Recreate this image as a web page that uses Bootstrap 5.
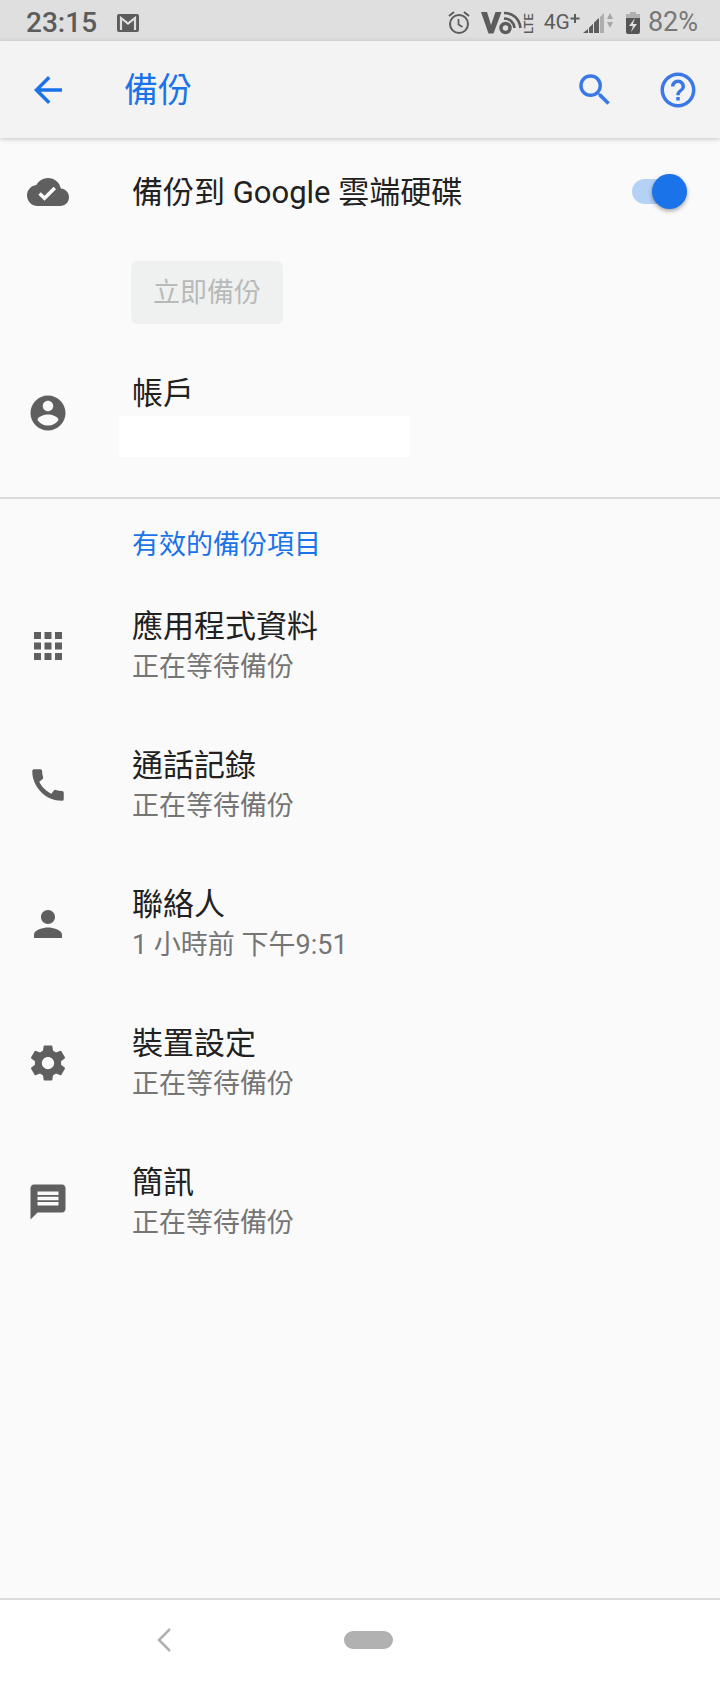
<!DOCTYPE html>
<html lang="zh-Hant">
<head>
<meta charset="utf-8">
<meta name="viewport" content="width=device-width, initial-scale=1">
<title>備份</title>
<link href="https://cdn.jsdelivr.net/npm/bootstrap@5.3.0/dist/css/bootstrap.min.css" rel="stylesheet">
<style>
  body { font-family: Roboto, "Noto Sans CJK TC", sans-serif; background: #fafafa; color: #212121; }
  .ink-blue { color: #1a73e8; }
  .status-bar { height: 41px; background: #dfdfdf; color: #5c5c5c; padding: 4px 22px 0 26px; font-size: 28px; line-height: 37px; }
  .status-bar svg { flex: none; }
  .gap-mail { margin-left: 20px; }
  .status-icons { gap: 11px; }
  .status-net { font-family: "Liberation Sans Narrow", Roboto, sans-serif; font-size: 21px; margin-left: -2px; }
  .status-signal { margin: 0 2px 0 -8px; }
  .status-level { color: #777; font-size: 27px; margin-left: -3px; }
  .app-bar { height: 97px; background: #f3f3f3; padding: 0 21px 0 27px; box-shadow: 0 1px 5px rgba(0,0,0,.22); z-index: 1; }
  .app-title { font-size: 34px; line-height: 48px; margin-left: 55px; }
  .icon-btn { width: 42px; height: 42px; padding: 0; border: 0; background: none; display: flex; color: #1a73e8; }
  .app-tools { gap: 41px; }
  .app-tools .icon-btn { color: #3b78e7; }
  .ico { width: 42px; height: 42px; fill: currentColor; flex: none; }
  .pref-row { min-height: 139px; padding: 0 33px 0 27px; gap: 63px; color: inherit; text-decoration: none; }
  .pref-row .ico { color: #5f5f5f; }
  .pref-main { min-height: 107px; }
  .pref-text { padding-top: 2px; }
  .pref-title { font-size: 31px; line-height: 40px; display: block; }
  .pref-note { font-size: 27px; line-height: 40px; display: block; color: #757575; }
  .text-column { padding-left: 132px; }
  .action-column { padding-left: 131px; }
  .btn-backup, .btn-backup:disabled { width: 152px; height: 63px; margin-top: 16px; margin-bottom: 19px; padding: 0; border: 0; border-radius: 6px; font-size: 27px; line-height: 40px; background: #eff1f1; color: #b8baba; opacity: 1; }
  .account-text { align-self: flex-start; padding-top: 31px; }
  .account-name { width: 291px; height: 41px; margin: 2px 0 0 -13px; background: #fff; }
  .section-list { border-top: 2px solid #dadada; margin-top: 15px; }
  .section-title { font-size: 27px; line-height: 40px; padding-top: 26px; padding-bottom: 11px; margin: 0; }
  .toggle.form-check-input { position: relative; width: 55px; height: 25px; margin: 0; border: 0; border-radius: 13px; background: #b5d1f6; }
  .toggle.form-check-input:checked { background: #b5d1f6; }
  .toggle::after { content: ""; position: absolute; right: 0; top: -5px; width: 35px; height: 35px; border-radius: 50%; background: #1a73e8; box-shadow: 0 2px 4px rgba(0,0,0,.35); }
  .nav-keys { height: 83px; background: #fff; border-top: 2px solid #dcdcdc; padding-left: 143px; padding-bottom: 2px; gap: 159px; }
  .home-key { width: 49px; height: 18px; padding: 0; border: 0; border-radius: 9px; background: #b1b1b1; }
</style>
</head>
<body>
<div class="min-vh-100 d-flex flex-column">
  <div class="status-bar d-flex align-items-center">
    <span class="fw-medium">23:15</span>
    <svg class="gap-mail" width="22" height="18" viewBox="0 0 22 18" aria-hidden="true"><rect width="22" height="18" rx="2" fill="#5c5c5c"/><path d="M4 16V4l7 5.500 7-5.500v12" fill="none" stroke="#dfdfdf" stroke-width="2.200"/></svg>
    <div class="status-icons d-flex align-items-center ms-auto">
      <svg width="22" height="24" viewBox="0 0 22 24" fill="none" stroke="#5c5c5c" aria-hidden="true"><circle cx="11" cy="13" r="9" stroke-width="2"/><path d="M1 5l5-4M21 5l-5-4" stroke-width="2"/><path d="M10.500 8v5.500l4 2.500" stroke-width="1.700"/></svg>
      <svg width="54" height="28" viewBox="0 0 54 28" aria-label="VoLTE"><path d="M0 3h6l4 13 4.500-13h6L12.500 24.500h-5z" fill="#5c5c5c"/><g fill="none" stroke="#5c5c5c"><circle cx="24.500" cy="19" r="4.500" stroke-width="3.500"/><path d="M23 9.500c6 0 10 4 10.500 9.500M23 4c9 0 15.500 5.500 16.500 15" stroke-width="2.600"/></g><text transform="translate(52 25) rotate(-90)" font-family="Roboto, sans-serif" font-size="13" font-weight="500" fill="#5c5c5c">LTE</text></svg>
      <span class="status-net">4G<svg width="10" height="20" viewBox="0 0 10 20" aria-label="+"><path d="M5 1v9M.5 5.500h9" stroke="#5c5c5c" stroke-width="2"/></svg></span>
      <svg class="status-signal" width="30" height="22" viewBox="0 0 30 22" aria-hidden="true"><path d="M0 21l5-4v4zM6 16l4-4v9H6zM11 11l4-4v14h-4z" fill="#5c5c5c"/><path d="M16 21V6l-5 5-5 5v5z" fill="#5c5c5c"/><path d="M17 5l4-4v20h-4z" fill="#aeaeae"/><path d="M5.500 15v6M10.500 11v10" stroke="#dfdfdf"/><path d="M24 7l3-6 3 6zM24 10h6l-3 6z" fill="#a5a5a5"/></svg>
      <svg width="14" height="22" viewBox="0 0 14 22" aria-hidden="true"><path d="M4 0h6v2h4v4H0V2h4z" fill="#b0b0b0"/><path d="M0 6h14v14q0 2-2 2H2q-2 0-2-2z" fill="#555"/><path d="M9 6l-6 8h4l-2 6 6-8H7z" fill="#dfdfdf"/></svg>
      <span class="status-level">82%</span>
    </div>
  </div>

  <header class="app-bar d-flex align-items-center position-relative">
    <button class="icon-btn" type="button" aria-label="返回"><svg class="ico" viewBox="0 0 24 24"><path d="M20 11H7.830l5.590-5.590L12 4l-8 8 8 8 1.410-1.410L7.830 13H20v-2z"/></svg></button>
    <h1 class="app-title ink-blue fw-normal mb-0">備份</h1>
    <div class="app-tools d-flex ms-auto">
      <button class="icon-btn" type="button" aria-label="搜尋"><svg class="ico" viewBox="0 0 24 24"><path d="M15.500 14h-.79l-.28-.27A6.471 6.471 0 0 0 16 9.500 6.500 6.500 0 1 0 9.500 16c1.610 0 3.090-.59 4.230-1.570l.27.28v.79l5 4.990L20.490 19l-4.990-5zm-6 0C7.010 14 5 11.990 5 9.500S7.010 5 9.500 5 14 7.010 14 9.500 11.990 14 9.500 14z"/></svg></button>
      <button class="icon-btn" type="button" aria-label="說明"><svg class="ico" viewBox="0 0 24 24"><path d="M11 18h2v-2h-2v2zm1-16C6.480 2 2 6.480 2 12s4.480 10 10 10 10-4.480 10-10S17.520 2 12 2zm0 18c-4.410 0-8-3.590-8-8s3.590-8 8-8 8 3.590 8 8-3.590 8-8 8zm0-14c-2.210 0-4 1.790-4 4h2c0-1.100.9-2 2-2s2 .9 2 2c0 2-3 1.750-3 5h2c0-2.250 3-2.500 3-5 0-2.210-1.790-4-4-4z"/></svg></button>
    </div>
  </header>

  <main class="flex-grow-1">
    <div class="pref-row pref-main d-flex align-items-center">
      <svg class="ico" viewBox="0 0 24 24"><path d="M19.350 10.040C18.670 6.590 15.640 4 12 4 9.110 4 6.600 5.640 5.350 8.040 2.340 8.360 0 10.910 0 14c0 3.310 2.690 6 6 6h13c2.760 0 5-2.240 5-5 0-2.640-2.050-4.780-4.650-4.960zM10 17l-3.500-3.500 1.410-1.410L10 14.170 15.180 9l1.410 1.410L10 17z"/></svg>
      <label class="pref-title pref-text flex-grow-1" for="backup">備份到 Google 雲端硬碟</label>
      <input class="form-check-input toggle" type="checkbox" role="switch" id="backup" checked>
    </div>
    <div class="action-column"><button class="btn btn-backup" type="button" disabled>立即備份</button></div>
    <a class="pref-row d-flex align-items-center" href="#account">
      <svg class="ico" viewBox="0 0 24 24"><path d="M12 2C6.480 2 2 6.480 2 12s4.480 10 10 10 10-4.480 10-10S17.520 2 12 2zm0 3c1.660 0 3 1.340 3 3s-1.340 3-3 3-3-1.340-3-3 1.340-3 3-3zm0 14.200c-2.500 0-4.710-1.280-6-3.220.03-1.990 4-3.080 6-3.080 1.990 0 5.970 1.090 6 3.080-1.290 1.940-3.500 3.220-6 3.220z"/></svg>
      <div class="account-text"><span class="pref-title">帳戶</span><div class="account-name"></div></div>
    </a>

    <section class="section-list">
      <h2 class="section-title text-column ink-blue fw-normal">有效的備份項目</h2>
      <a class="pref-row d-flex align-items-center" href="#apps">
        <svg class="ico" viewBox="0 0 24 24"><path d="M4 8h4V4H4v4zm6 12h4v-4h-4v4zm-6 0h4v-4H4v4zm0-6h4v-4H4v4zm6 0h4v-4h-4v4zm6-10v4h4V4h-4zm-6 4h4V4h-4v4zm6 6h4v-4h-4v4zm0 6h4v-4h-4v4z"/></svg>
        <div class="pref-text"><span class="pref-title">應用程式資料</span><span class="pref-note">正在等待備份</span></div>
      </a>
      <a class="pref-row d-flex align-items-center" href="#calls">
        <svg class="ico" viewBox="0 0 24 24"><path d="M20.010 15.380c-1.230 0-2.420-.2-3.530-.56a.977.977 0 0 0-1.010.24l-1.570 1.970c-2.830-1.350-5.480-3.900-6.890-6.830l1.950-1.660c.27-.28.35-.67.24-1.020-.37-1.110-.56-2.300-.56-3.530 0-.54-.45-.99-.99-.99H4.190C3.650 3 3 3.240 3 3.990 3 13.280 10.730 21 20.010 21c.71 0 .99-.63.99-1.180v-3.450c0-.54-.45-.99-.99-.99z"/></svg>
        <div class="pref-text"><span class="pref-title">通話記錄</span><span class="pref-note">正在等待備份</span></div>
      </a>
      <a class="pref-row d-flex align-items-center" href="#contacts">
        <svg class="ico" viewBox="0 0 24 24"><path d="M12 12c2.210 0 4-1.790 4-4s-1.790-4-4-4-4 1.790-4 4 1.790 4 4 4zm0 2c-2.670 0-8 1.340-8 4v2h16v-2c0-2.660-5.330-4-8-4z"/></svg>
        <div class="pref-text"><span class="pref-title">聯絡人</span><span class="pref-note">1 小時前 下午9:51</span></div>
      </a>
      <a class="pref-row d-flex align-items-center" href="#device">
        <svg class="ico" viewBox="0 0 24 24"><path d="M19.430 12.980c.04-.32.07-.64.07-.98s-.03-.66-.07-.98l2.110-1.650c.19-.15.24-.42.12-.64l-2-3.460c-.12-.22-.39-.3-.61-.22l-2.490 1c-.52-.4-1.080-.73-1.690-.98l-.38-2.650A.488.488 0 0 0 14 2h-4c-.25 0-.46.18-.49.42l-.38 2.650c-.61.25-1.170.59-1.690.98l-2.490-1c-.23-.09-.49 0-.61.22l-2 3.460c-.13.22-.07.49.12.64l2.110 1.650c-.04.32-.07.65-.07.98s.03.66.07.98l-2.110 1.650c-.19.15-.24.42-.12.64l2 3.460c.12.22.39.3.61.22l2.490-1c.52.4 1.080.73 1.690.98l.38 2.650c.03.24.24.42.49.42h4c.25 0 .46-.18.49-.42l.38-2.650c.61-.25 1.170-.59 1.690-.98l2.490 1c.23.09.49 0 .61-.22l2-3.460c.12-.22.07-.49-.12-.64l-2.110-1.650zM12 15.500c-1.930 0-3.500-1.570-3.500-3.500s1.570-3.500 3.500-3.500 3.500 1.570 3.500 3.500-1.570 3.500-3.500 3.500z"/></svg>
        <div class="pref-text"><span class="pref-title">裝置設定</span><span class="pref-note">正在等待備份</span></div>
      </a>
      <a class="pref-row d-flex align-items-center" href="#sms">
        <svg class="ico" viewBox="0 0 24 24"><path d="M20 2H4c-1.100 0-1.990.9-1.990 2L2 22l4-4h14c1.100 0 2-.9 2-2V4c0-1.100-.9-2-2-2zM6 9h12v2H6V9zm12 5H6v-2h12v2zm0-6H6V6h12v2z"/></svg>
        <div class="pref-text"><span class="pref-title">簡訊</span><span class="pref-note">正在等待備份</span></div>
      </a>
    </section>
  </main>

  <nav class="nav-keys d-flex align-items-center">
    <button class="icon-btn" type="button" aria-label="返回"><svg width="42" height="42" viewBox="0 0 42 42" fill="none" stroke="#b1b1b1" stroke-width="2.500"><path d="M27 10L16 21l11 11"/></svg></button>
    <button class="home-key" type="button" aria-label="主畫面"></button>
  </nav>
</div>
<script src="https://cdn.jsdelivr.net/npm/bootstrap@5.3.0/dist/js/bootstrap.bundle.min.js"></script>
</body>
</html>
